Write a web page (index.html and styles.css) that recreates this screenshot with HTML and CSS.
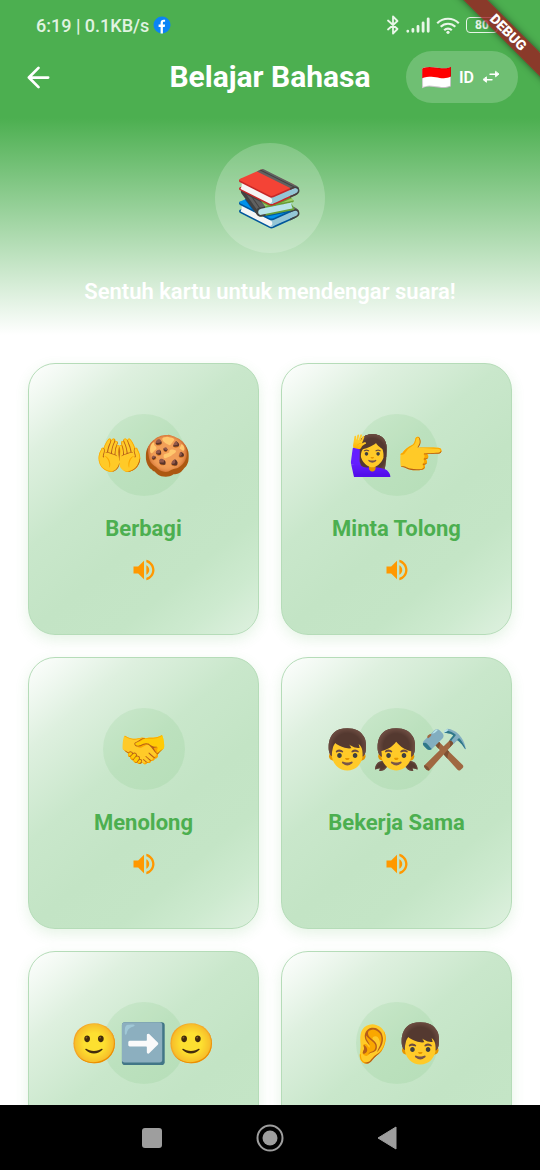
FILE: index.html
```
<!DOCTYPE html>
<html lang="id">
<head>
  <meta charset="UTF-8">
  <meta name="viewport" content="width=device-width, initial-scale=1.0">
  <title>Belajar Bahasa</title>
  <link rel="stylesheet" href="styles.css">
</head>
<body>
  <svg class="sprite" aria-hidden="true">
    <symbol id="volume" viewBox="0 0 24 24">
      <path d="M3 9v6h4l5 5V4L7 9H3zm13.500 3c0-1.770-1.020-3.290-2.500-4.030v8.050c1.480-.730 2.500-2.250 2.500-4.020zM14 3.230v2.060c2.890.860 5 3.540 5 6.710s-2.110 5.850-5 6.710v2.060c4.010-.910 7-4.490 7-8.770s-2.990-7.860-7-8.770z"/>
    </symbol>
  </svg>

  <div class="banner"><span>DEBUG</span></div>

  <div class="top">
    <!-- status bar -->
    <div class="status-bar">
      <span class="status-text">6:19 | 0.1KB/s</span>
      <svg class="facebook" viewBox="0 0 18 18">
        <circle cx="9" cy="9" r="8.500" fill="#0a84f5"/>
        <path d="M7.600 17.400V11H5.600V8.600h2V7c0-2.200 1.200-3.300 3.100-3.300.700 0 1.400.1 1.400.1v2h-1c-.9 0-1.200.5-1.200 1.100v1.700h2.200l-.4 2.400H9.900v6.400z" fill="#fff"/>
      </svg>
      <div class="status-icons">
        <svg width="14" height="20" viewBox="0 0 14 20" fill="none" stroke="#e8f6e8" stroke-width="1.800" stroke-linejoin="round" stroke-linecap="round">
          <path d="M2 5.500l9.500 8.500L7 18.500V1.500L11.500 6 2 14.500"/>
        </svg>
        <svg width="24" height="16" viewBox="0 0 24 16" stroke="#e8f6e8" stroke-width="2.800" stroke-linecap="round">
          <path d="M1.800 14.200v.1M6.900 12.300v2M12 9.500v4.800M17.100 5.800v8.500M22.200 1.800v12.500"/>
        </svg>
        <svg width="24" height="17" viewBox="0 0 24 17" fill="none" stroke="#e8f6e8" stroke-width="2.200">
          <path d="M1.200 6.200a15.300 15.300 0 0 1 21.600 0M4.700 9.800a10.300 10.300 0 0 1 14.600 0M8.200 13.200a5.400 5.400 0 0 1 7.600 0"/>
          <circle cx="12" cy="15.300" r="1.600" fill="#e8f6e8" stroke="none"/>
        </svg>
        <span class="battery">80</span>
      </div>
    </div>

    <header class="app-bar">
      <button class="back-btn" aria-label="Kembali">
        <svg viewBox="0 0 24 24" fill="none" stroke="#fff" stroke-width="2" stroke-linecap="round" stroke-linejoin="round">
          <path d="M19 12H5M12 5l-7 7 7 7"/>
        </svg>
      </button>
      <h1 class="title">Belajar Bahasa</h1>
      <button class="lang-btn">
        <span class="flag">🇮🇩</span>
        <span>ID</span>
        <svg viewBox="0 0 24 24" fill="none" stroke="#fff" stroke-width="1.800" stroke-linecap="round">
          <path d="M5 15h8M11 9h8"/>
          <path d="M7 12.200v5.600L3.600 15zM17 6.200v5.600L20.400 9z" fill="#fff" stroke-width="1" stroke-linejoin="round"/>
        </svg>
      </button>
    </header>
  </div>

  <main class="content">
    <section class="hero">
      <div class="hero-icon">📚</div>
      <p class="hero-text">Sentuh kartu untuk mendengar suara!</p>
    </section>

    <section class="card-grid">
      <button class="card">
        <span class="card-emoji">🤲🍪</span>
        <span class="card-label">Berbagi</span>
        <svg class="card-sound"><use href="#volume"/></svg>
      </button>
      <button class="card">
        <span class="card-emoji">🙋‍♀️👉</span>
        <span class="card-label">Minta Tolong</span>
        <svg class="card-sound"><use href="#volume"/></svg>
      </button>
      <button class="card">
        <span class="card-emoji">🤝</span>
        <span class="card-label">Menolong</span>
        <svg class="card-sound"><use href="#volume"/></svg>
      </button>
      <button class="card">
        <span class="card-emoji">👦👧⚒️</span>
        <span class="card-label">Bekerja Sama</span>
        <svg class="card-sound"><use href="#volume"/></svg>
      </button>
      <button class="card" aria-label="Kartu 5">
        <span class="card-emoji">🙂➡️🙂</span>
      </button>
      <button class="card" aria-label="Kartu 6">
        <span class="card-emoji">👂👦</span>
      </button>
    </section>
  </main>

  <!-- android navigation -->
  <nav class="nav-bar">
    <button class="nav-btn" aria-label="Aplikasi terbaru">
      <svg viewBox="0 0 28 28"><rect x="4" y="4" width="20" height="20" rx="3" fill="#9e9e9e"/></svg>
    </button>
    <button class="nav-btn" aria-label="Beranda">
      <svg viewBox="0 0 28 28">
        <circle cx="14" cy="14" r="12.500" fill="none" stroke="#9e9e9e" stroke-width="2"/>
        <circle cx="14" cy="14" r="7.500" fill="#9e9e9e"/>
      </svg>
    </button>
    <button class="nav-btn" aria-label="Kembali">
      <svg viewBox="0 0 28 28"><path d="M4 14L22 3v22z" fill="#9e9e9e" stroke="#9e9e9e" stroke-linejoin="round"/></svg>
    </button>
  </nav>
</body>
</html>
```
FILE: styles.css
```
* {
  box-sizing: border-box;
}

body {
  margin: 0;
  height: 100vh;
  display: flex;
  flex-direction: column;
  position: relative;
  overflow: hidden;
  background: #fff;
  font-family: Roboto, "Noto Color Emoji", sans-serif;
}

button {
  border: none;
  padding: 0;
  background: none;
  font-family: inherit;
  cursor: pointer;
}

.sprite {
  display: none;
}

/* debug ribbon over the top right corner */
.banner {
  position: absolute;
  top: 0;
  right: 0;
  width: 112px;
  height: 112px;
  overflow: hidden;
  pointer-events: none;
  z-index: 5;
}

.banner span {
  position: absolute;
  top: 24px;
  right: -48px;
  width: 160px;
  background: rgba(159, 19, 29, 0.75);
  box-shadow: 0 0 7px rgba(0, 0, 0, 0.5);
  color: #fff;
  font-size: 14px;
  font-weight: 900;
  line-height: 17px;
  text-align: center;
  transform: rotate(45deg);
}

.top {
  background: #4caf50;
  color: #fff;
}

.status-bar {
  display: flex;
  align-items: center;
  height: 50px;
  padding: 0 42px 0 36px;
  gap: 4px;
}

.status-text {
  font-size: 18px;
  font-weight: 500;
  color: #e0f3e1;
}

.facebook {
  width: 18px;
  height: 18px;
}

.status-icons {
  display: flex;
  align-items: center;
  gap: 6px;
  margin-left: auto;
}

.battery {
  width: 32px;
  height: 16px;
  border: 1px solid #e8f6e8;
  border-radius: 4px;
  color: #e8f6e8;
  font-size: 12px;
  font-weight: 700;
  line-height: 14px;
  text-align: center;
}

.app-bar {
  display: grid;
  grid-template-columns: 1fr auto 1fr;
  align-items: center;
  height: 54px;
  padding: 0 22px;
}

.back-btn {
  width: 33px;
  height: 33px;
}

.back-btn svg {
  display: block;
}

.title {
  margin: 0;
  font-size: 30px;
  font-weight: 700;
  line-height: 36px;
}

.lang-btn {
  display: flex;
  align-items: center;
  justify-self: end;
  gap: 6px;
  height: 52px;
  padding: 0 16px;
  border-radius: 28px;
  background: rgba(255, 255, 255, 0.2);
  color: #fff;
  font-size: 16px;
  font-weight: 600;
}

.lang-btn svg {
  width: 22px;
  height: 22px;
}

.flag {
  font-size: 25px;
}

.content {
  flex: 1;
  min-height: 0;
  overflow: hidden;
}

.hero {
  display: flex;
  flex-direction: column;
  align-items: center;
  gap: 26px;
  padding: 39px 0 30px;
  background: linear-gradient(#4caf50 6%, #fff);
}

.hero-icon {
  display: flex;
  align-items: center;
  justify-content: center;
  width: 110px;
  height: 110px;
  border-radius: 50%;
  background: rgba(255, 255, 255, 0.2);
  font-size: 55px;
}

.hero-text {
  margin: 0;
  color: #fff;
  font-size: 22px;
  font-weight: 600;
  line-height: 26px;
}

.card-grid {
  display: grid;
  grid-template-columns: 1fr 1fr;
  gap: 22px;
  padding: 28px;
}

.card {
  display: flex;
  flex-direction: column;
  align-items: center;
  aspect-ratio: 231 / 272;
  padding-top: 50px;
  border: 1px solid #b5dcb8;
  border-radius: 27px;
  background: linear-gradient(140deg, #fff 0%, #def0df 20%, #c9e7cb 40%, #c3e4c5 58%, #c4e5c6 74%, #cdeacf 86%, #dff1e0 100%);
  background-origin: border-box;
  box-shadow: 0 5px 14px rgba(76, 175, 80, 0.14);
}

.card-emoji {
  display: flex;
  align-items: center;
  justify-content: center;
  width: 82px;
  height: 82px;
  margin-bottom: 20px;
  padding-top: 2px;
  border-radius: 50%;
  background: rgba(76, 175, 80, 0.1);
  font-size: 39px;
  white-space: nowrap;
}

.card-label {
  margin-bottom: 14px;
  color: #4caf50;
  font-size: 22px;
  font-weight: 700;
  line-height: 26px;
}

.card-sound {
  width: 28px;
  height: 28px;
  fill: #ff9800;
}

.nav-bar {
  display: flex;
  align-items: center;
  justify-content: center;
  gap: 90px;
  height: 65px;
  background: #000;
}

.nav-btn {
  width: 28px;
  height: 28px;
}

.nav-btn svg {
  display: block;
}
```
